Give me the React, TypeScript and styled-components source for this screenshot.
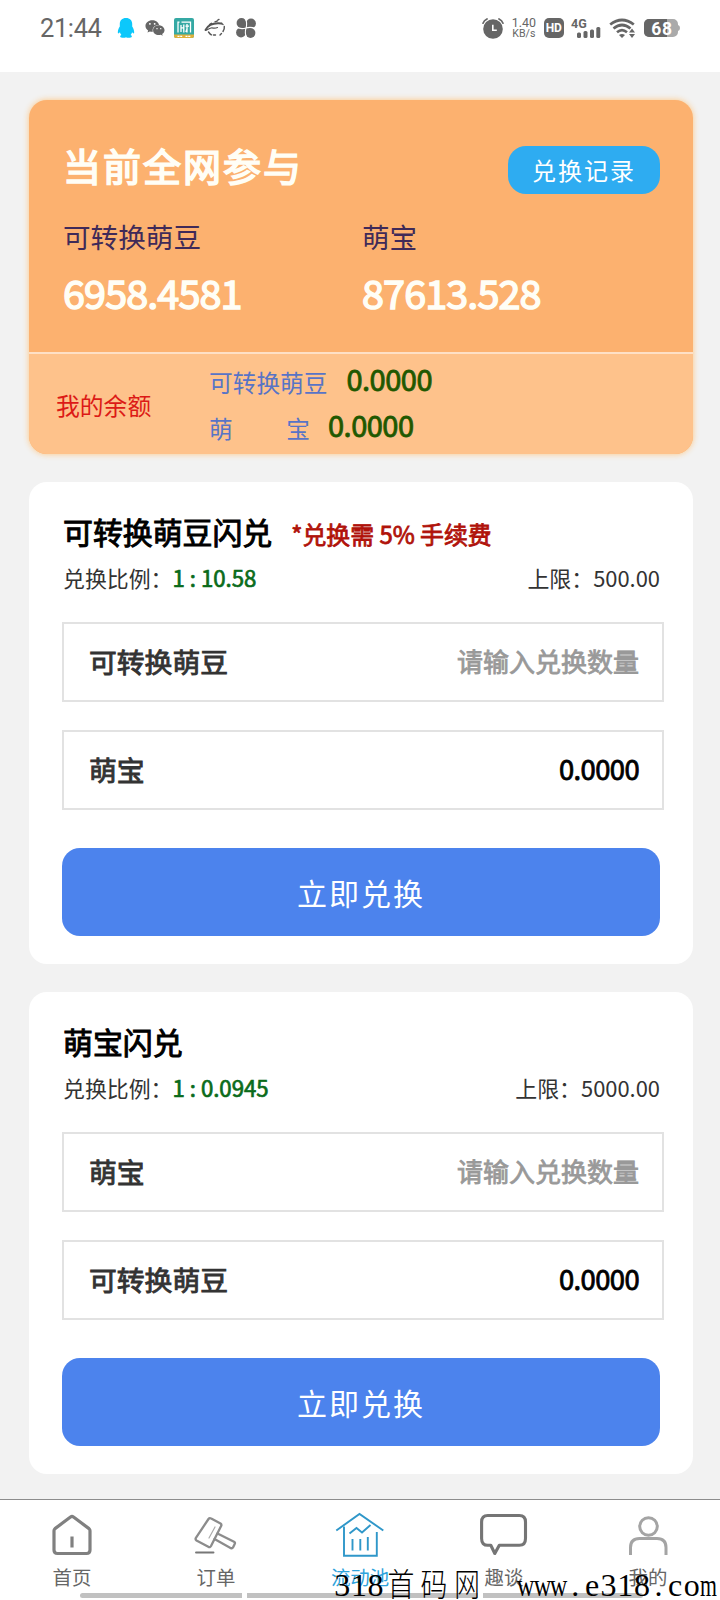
import React from "react";
import styled, { createGlobalStyle } from "styled-components";
import { FaWeixin } from "react-icons/fa";

const GlobalStyle = createGlobalStyle`
  * { box-sizing: border-box; }
  body {
    margin: 0;
    background: #f2f2f2;
    font-family: "Noto Sans CJK SC", sans-serif;
  }
  svg { display: block; flex: none; }
`;

const Screen = styled.div`
  position: relative;
  display: flex;
  flex-direction: column;
  width: 720px;
  height: 1600px;
  overflow: hidden;
  background: #f2f2f2;
`;

/* ---------- status bar ---------- */

const StatusBar = styled.header`
  display: flex;
  justify-content: space-between;
  height: 72px;
  padding: 16px 40px 0 40px;
  background: #fff;
  color: #666;
`;

const StatusGroup = styled.div<{ $gap: number }>`
  display: flex;
  align-items: center;
  gap: ${(p) => p.$gap}px;
  height: 24px;
`;

const Clock = styled.span`
  width: 67px;
  font: 400 25.5px/24px Roboto, sans-serif;
  letter-spacing: -0.4px;
`;

const NetSpeed = styled.span`
  display: flex;
  flex-direction: column;
  align-items: center;
  width: 24px;
  font: 400 12.4px/12px Roboto, sans-serif;

  span:last-child { font-size: 10.6px; line-height: 10px; }
`;

/* ---------- summary card ---------- */

const Content = styled.main`
  display: flex;
  flex-direction: column;
  gap: 28px;
  flex: 1;
  padding: 28px 27px 0 29px;
`;

const SummaryCard = styled.section`
  height: 354px;
  border-radius: 18px;
  background: #fcb16f;
  box-shadow: 0 0 6px #fdc680;
  overflow: hidden;
`;

const SummaryTop = styled.div`
  height: 254px;
  padding: 46px 33px 0 34px;
  border-bottom: 2px solid #fee0c6;
`;

const SummaryHeader = styled.div`
  display: flex;
  justify-content: space-between;
  align-items: flex-start;
`;

const SummaryTitle = styled.h1`
  margin: 0;
  color: #fffef6;
  font-size: 38px;
  font-weight: 400;
  line-height: 37px;
  letter-spacing: 2px;
  -webkit-text-stroke: 1.7px #fffef6;
`;

const HistoryButton = styled.button`
  width: 152px;
  height: 48px;
  padding: 0;
  border: 0;
  border-radius: 18px;
  background: #2eacf1;
  color: #fff;
  font: 400 24px/48px "Noto Sans CJK SC", sans-serif;
  letter-spacing: 2px;
`;

const Stats = styled.div`
  display: grid;
  grid-template-columns: 299px 1fr;
  margin-top: 28px;
`;

const StatLabel = styled.div`
  color: #402a58;
  font-size: 27.6px;
  line-height: 28px;
`;

const StatValue = styled.div`
  margin-top: 16px;
  color: #fffef6;
  font-size: 39.6px;
  line-height: 51px;
  letter-spacing: -0.9px;
  -webkit-text-stroke: 1.5px #fffef6;
`;

const BalanceBar = styled.div`
  display: flex;
  height: 100px;
  background: #fec28b;
`;

const BalanceTitle = styled.div`
  width: 180px;
  padding-left: 27px;
  color: #dc1a16;
  font-size: 23.8px;
  line-height: 102px;
`;

const BalanceRows = styled.div`
  padding-top: 5px;
`;

const BalanceRow = styled.div<{ $gap: number }>`
  display: flex;
  align-items: center;
  gap: ${(p) => p.$gap}px;
  height: 46px;
`;

const BalanceName = styled.span<{ $spread?: boolean }>`
  display: flex;
  justify-content: space-between;
  width: ${(p) => (p.$spread ? "101px" : "auto")};
  color: #5874c6;
  font-size: 23.7px;
  line-height: 46px;
`;

const BalanceValue = styled.span`
  padding-bottom: 7px;
  color: #1f5800;
  font-size: 29px;
  line-height: 39px;
  letter-spacing: -0.5px;
  -webkit-text-stroke: 0.8px #1f5800;
`;

/* ---------- exchange cards ---------- */

const ExchangeCard = styled.section`
  height: 482px;
  padding: 30px 33px 28px;
  border-radius: 18px;
  background: #fff;
`;

const CardHeading = styled.div`
  display: flex;
  gap: 19px;
  height: 40px;
  padding-left: 1px;
`;

const CardTitle = styled.h2`
  margin: 0;
  color: #000;
  font-size: 29.9px;
  font-weight: 400;
  line-height: 39px;
  -webkit-text-stroke: 1px #000;
`;

const FeeNote = styled.span`
  padding-top: 2px;
  color: #b0120a;
  font-size: 23.9px;
  line-height: 40px;
  -webkit-text-stroke: 0.8px #b0120a;
`;

const RateRow = styled.div`
  display: flex;
  justify-content: space-between;
  margin-top: 10px;
  padding-left: 1px;
  color: #333;
  font-size: 21.9px;
  line-height: 31px;
`;

const Rate = styled.span`
  color: #0a6b1a;
  font-size: 22.2px;
  -webkit-text-stroke: 0.7px #0a6b1a;
`;

const Field = styled.label<{ $top: number }>`
  display: flex;
  justify-content: space-between;
  align-items: center;
  width: 602px;
  height: 80px;
  margin-top: ${(p) => p.$top}px;
  padding: 0 23px 3px 25px;
  border: 2px solid #e2e2e2;
  color: #333;
  font-size: 27.8px;
  -webkit-text-stroke: 0.9px #333;
`;

const FieldInput = styled.input`
  width: 200px;
  height: 60px;
  padding: 0;
  border: 0;
  outline: 0;
  background: transparent;
  text-align: right;
  font: 400 26px/60px "Noto Sans CJK SC", sans-serif;
  -webkit-text-stroke: 0.8px #999;

  &::placeholder { color: #999; opacity: 1; }
`;

const FieldValue = styled.output`
  padding-bottom: 2px;
  color: #000;
  font-size: 27.4px;
  letter-spacing: -0.6px;
  -webkit-text-stroke: 0.8px #000;
`;

const SubmitButton = styled.button`
  display: block;
  width: 598px;
  height: 88px;
  margin-top: 38px;
  padding: 0;
  border: 0;
  border-radius: 18px;
  background: #4c83ed;
  color: #fff;
  font: 400 30px/88px "Noto Sans CJK SC", sans-serif;
  letter-spacing: 2px;
`;

/* ---------- tab bar ---------- */

const TabBar = styled.nav`
  display: grid;
  grid-template-columns: repeat(5, 144px);
  height: 101px;
  border-top: 1px solid #8c8c8c;
  background: #fff;
`;

const Tab = styled.a<{ $active?: boolean }>`
  display: flex;
  flex-direction: column;
  align-items: center;
  padding-top: 12px;
  color: ${(p) => (p.$active ? "#2fa3dc" : "#666")};
  font-size: 19.4px;
  line-height: 28px;

  svg { margin-bottom: 3px; }
`;

const GestureBar = styled.div`
  position: absolute;
  left: 80px;
  bottom: 2px;
  display: grid;
  grid-template-columns: 162px 231px 160px;
  gap: 5px;
  height: 5px;

  i { background: #c1c1c1; }
  i:first-child { border-radius: 3px 0 0 3px; }
  i:last-child { border-radius: 0 3px 3px 0; }
`;

const Watermark = styled.div`
  position: absolute;
  left: 334px;
  bottom: 0;
  display: flex;
  height: 30px;
  color: #000;
  font: 400 32px/30px "Liberation Serif", "Noto Sans CJK SC", serif;
`;

const Glyph = styled.span<{ $cell: number; $squeeze: number }>`
  display: flex;
  justify-content: center;
  width: ${(p) => p.$cell}px;
  height: 30px;
  white-space: pre;

  span {
    font-weight: 300;
    transform: scaleX(${(p) => p.$squeeze});
  }
`;

/* ---------- status icons ---------- */

const Penguin = () => (
  <svg width="18" height="20" viewBox="0 0 18 20" fill="#0cc8fb">
    <path d="M9 0C5 0 2.800 2.600 2.800 6v2.500C1.500 10.500.6 13 .9 15c.2.8 1.200.3 2-.7.3 1 .8 1.900 1.500 2.600-1 .4-1.400 1-1.200 1.800.3 1.300 4.500 1.500 5.800.5 1.300 1 5.500.8 5.800-.5.2-.8-.2-1.400-1.200-1.800.7-.7 1.200-1.600 1.500-2.600.8 1 1.800 1.500 2 .7.3-2-.6-4.500-1.900-6.500V6C15.200 2.600 13 0 9 0z" />
  </svg>
);

const TealApp = () => (
  <svg width="20" height="20" viewBox="0 0 20 20">
    <rect width="20" height="20" rx="2" fill="#35a9a4" />
    <path d="M0 16.500h20V18a2 2 0 0 1-2 2H2a2 2 0 0 1-2-2z" fill="#dfb13a" />
    <path d="M4 14.500V4.200h1.500M7.500 4.200H16.500V14.500M7 7v7M9.800 6.500v8M7 9.800h2.500M11.500 8.200h3.500M13 6v8.500M11.800 14l1.200-3" fill="none" stroke="#fff" strokeWidth="1.300" />
    <path d="M3.500 18.300h5M11.500 18.300h5.500" stroke="#fff" strokeWidth="1.300" strokeDasharray="2 .7" />
  </svg>
);

const RunnerApp = () => (
  <svg width="22" height="20" viewBox="0 0 22 20" fill="none" stroke="#555" strokeLinecap="round">
    <path d="M1.500 12C4 7 9 4.500 17.500 5.500" strokeWidth="1.900" />
    <path d="M5.500 6.500l2-1.200M11 3.800l2.500-1M14 1.800l1-.4M17.500 5.500l1.500 1" strokeWidth="1.400" />
    <path d="M1.500 12.500c2.500-1 3.500-2 5.500-2.500 2.500-.3 3.500.8 6.500-.5" strokeWidth="1.200" />
    <path d="M4.500 14c1 1.500 2 2.500 3 2.800M9.500 17h2M20.300 8.500c.3 2-.3 3.500-1.300 5M17.500 15.500L16 17" strokeWidth="1.400" />
  </svg>
);

const FanApp = () => (
  <svg width="20" height="20" viewBox="0 0 20 20">
    <g fill="#666">
      <circle cx="5.500" cy="5" r="4.900" />
      <circle cx="15" cy="5.500" r="4.900" />
      <circle cx="14.500" cy="15" r="4.900" />
      <circle cx="5" cy="14.500" r="4.900" />
      <rect x="6" y="6" width="8" height="8" />
    </g>
    <path d="M10 10Q11.500 5 9.500 1M10 10Q15 8.500 19.500 10.800M10 10Q8.500 15 10.500 19M10 10Q5 11.500.5 9.200" fill="none" stroke="#fff" strokeWidth="1.100" />
  </svg>
);

const Alarm = () => (
  <svg width="22" height="21" viewBox="0 0 22 21">
    <circle cx="11" cy="11" r="9.800" fill="#666" />
    <path d="M1 5.200Q2 2.500 5 1M21 5.200Q20 2.500 17 1" fill="none" stroke="#666" strokeWidth="1.700" strokeLinecap="round" />
    <path d="M10.800 6.800v5.400h4" fill="none" stroke="#fff" strokeWidth="1.600" />
  </svg>
);

const HdBadge = styled.span`
  width: 20px;
  height: 20px;
  border-radius: 5px;
  background: #666;
  color: #fff;
  font: 700 12px/20px Roboto, sans-serif;
  letter-spacing: -0.3px;
  text-align: center;
`;

const Signal = () => (
  <svg width="30" height="20" viewBox="0 0 30 20" fill="#666" overflow="visible">
    <text x="0" y="9.500" fontFamily="Roboto" fontWeight="700" fontSize="12.500">4G</text>
    <rect x="6" y="14.500" width="4" height="5.500" rx="1.500" />
    <rect x="12.500" y="13" width="4" height="7" rx="1.500" />
    <rect x="19" y="11.500" width="4" height="8.500" rx="1.500" />
    <rect x="25.300" y="9" width="4" height="11" rx="1.500" />
  </svg>
);

const Wifi = () => (
  <svg width="27" height="20" viewBox="0 0 27 20" fill="none" stroke="#666">
    <path d="M1.200 6.500Q13 -2.500 24.800 6.500" strokeWidth="2.800" />
    <path d="M4.500 10.500Q13 3.500 21.500 10.500" strokeWidth="2.700" />
    <path d="M8 14.300Q13 10 18 14.300" strokeWidth="2.600" />
    <path d="M10 17q3-1.800 6 0l-3 3z" fill="#666" stroke="none" />
    <path d="M20 14.500h6l-3-4zM20 16h6l-3 4z" fill="#666" stroke="none" />
  </svg>
);

const Battery = () => (
  <svg width="36" height="18" viewBox="0 0 36 18">
    <path d="M5 0h24a5 5 0 0 1 5 5v1q2 .5 2 3t-2 3v1a5 5 0 0 1-5 5H5a5 5 0 0 1-5-5V5a5 5 0 0 1 5-5z" fill="#aaa" />
    <path d="M5 0h18v18H5a5 5 0 0 1-5-5V5a5 5 0 0 1 5-5z" fill="#666" />
    <text x="18" y="15.500" textAnchor="middle" fontFamily="Roboto" fontWeight="700" fontSize="17.500" letterSpacing=".8" fill="#fff">68</text>
  </svg>
);

/* ---------- tab icons ---------- */

const HomeIcon = () => (
  <svg width="50" height="48" viewBox="0 0 50 48" fill="none" stroke="#808080" strokeWidth="3.200" strokeLinejoin="round" strokeLinecap="round">
    <path d="M7 18.800Q7 17.500 8 16.600L23.500 5q1.500-1 3 0L42 16.600q1 .9 1 2.200V38q0 3.500-3.500 3.500h-29q-3.500 0-3.500-3.500z" />
    <path d="M25 24.500v11" strokeLinecap="butt" />
  </svg>
);

const GavelIcon = () => (
  <svg width="50" height="48" viewBox="0 0 50 48" fill="none" stroke="#8c8c8c" strokeWidth="2.300" strokeLinejoin="round" strokeLinecap="round">
    <path d="M17.500 7Q18.500 5.500 20.200 6.500L29.500 11.500q1.500 1 .5 2.800L20 34q-1 1.800-2.700.8L5.500 28.500q-1.500-1-.6-2.600z" />
    <path d="M26.500 21.500l16.500 8.200q1.500.9.7 2.300l-1.700 3.500q-.8 1.300-2.500.4L23.500 27" />
    <path d="M24 15l-6 11" strokeWidth="1.200" stroke="#aaa" />
    <path d="M5 40.500h17.500" stroke="#777" strokeWidth="1.900" />
  </svg>
);

const PoolIcon = () => (
  <svg width="50" height="48" viewBox="0 0 50 48" fill="none" stroke="#2f97c9" strokeWidth="1.900">
    <path d="M1.300 18.500L24.500 2 48.300 18.500" />
    <path d="M9 14.500v29.200h32.800V20" />
    <path d="M14.500 21.500l7-5.500 5.500 4.500 8.500-7.500" />
    <path d="M17.500 27v11.500M25.300 27v11.500M32.800 25v13.500" />
  </svg>
);

const ChatIcon = () => (
  <svg width="50" height="48" viewBox="0 0 50 48" fill="none" stroke="#757575" strokeWidth="3.100" strokeLinejoin="round">
    <path d="M8.800 3.500h31.500q6.200 0 6.200 6.500v16.500q0 6.800-6.200 6.800H20.300L15.800 41.500l-4-8.200h-3q-6.200 0-6.200-6.800V10q0-6.500 6.200-6.500z" />
  </svg>
);

const PersonIcon = () => (
  <svg width="50" height="48" viewBox="0 0 50 48" fill="none" stroke="#a4a4a4" strokeWidth="3">
    <circle cx="25.500" cy="14.500" r="8.800" />
    <path d="M7.500 43V35.500q0-9 9-9h17.500q9 0 9 9v7.500" />
  </svg>
);

const tabs = [
  { label: "首页", Icon: HomeIcon },
  { label: "订单", Icon: GavelIcon },
  { label: "流动池", Icon: PoolIcon, active: true },
  { label: "趣谈", Icon: ChatIcon },
  { label: "我的", Icon: PersonIcon },
];

const exchanges = [
  { title: "可转换萌豆闪兑", note: "*兑换需 5% 手续费", rate: "1 : 10.58", limit: "500.00", from: "可转换萌豆", to: "萌宝" },
  { title: "萌宝闪兑", note: "", rate: "1 : 0.0945", limit: "5000.00", from: "萌宝", to: "可转换萌豆" },
];

const squeeze: Record<string, number> = { w: 0.76, m: 0.68, 首: 0.84, 码: 0.84, 网: 0.8 };
const cellWidth = (ch: string) => ("首码网".includes(ch) ? 33.3 : 16.65);

export default function App() {
  return (
    <>
      <GlobalStyle />
      <Screen>
        <StatusBar>
          <StatusGroup $gap={9.8}>
            <Clock>21:44</Clock>
            <Penguin />
            <FaWeixin size={20} />
            <TealApp />
            <RunnerApp />
            <FanApp />
          </StatusGroup>
          <StatusGroup $gap={7.8}>
            <Alarm />
            <NetSpeed>
              <span>1.40</span>
              <span>KB/s</span>
            </NetSpeed>
            <HdBadge>HD</HdBadge>
            <Signal />
            <Wifi />
            <Battery />
          </StatusGroup>
        </StatusBar>

        <Content>
          <SummaryCard>
            <SummaryTop>
              <SummaryHeader>
                <SummaryTitle>当前全网参与</SummaryTitle>
                <HistoryButton>兑换记录</HistoryButton>
              </SummaryHeader>
              <Stats>
                <div>
                  <StatLabel>可转换萌豆</StatLabel>
                  <StatValue>6958.4581</StatValue>
                </div>
                <div>
                  <StatLabel>萌宝</StatLabel>
                  <StatValue>87613.528</StatValue>
                </div>
              </Stats>
            </SummaryTop>
            <BalanceBar>
              <BalanceTitle>我的余额</BalanceTitle>
              <BalanceRows>
                <BalanceRow $gap={19}>
                  <BalanceName>可转换萌豆</BalanceName>
                  <BalanceValue>0.0000</BalanceValue>
                </BalanceRow>
                <BalanceRow $gap={18}>
                  <BalanceName $spread>
                    <span>萌</span>
                    <span>宝</span>
                  </BalanceName>
                  <BalanceValue>0.0000</BalanceValue>
                </BalanceRow>
              </BalanceRows>
            </BalanceBar>
          </SummaryCard>

          {exchanges.map((x) => (
            <ExchangeCard key={x.title}>
              <CardHeading>
                <CardTitle>{x.title}</CardTitle>
                {x.note && <FeeNote>{x.note}</FeeNote>}
              </CardHeading>
              <RateRow>
                <span>
                  兑换比例：<Rate>{x.rate}</Rate>
                </span>
                <span>上限：{x.limit}</span>
              </RateRow>
              <Field $top={29}>
                {x.from}
                <FieldInput placeholder="请输入兑换数量" />
              </Field>
              <Field $top={28}>
                {x.to}
                <FieldValue>0.0000</FieldValue>
              </Field>
              <SubmitButton>立即兑换</SubmitButton>
            </ExchangeCard>
          ))}
        </Content>

        <TabBar>
          {tabs.map(({ label, Icon, active }) => (
            <Tab key={label} $active={active}>
              <Icon />
              {label}
            </Tab>
          ))}
        </TabBar>
        <GestureBar>
          <i />
          <i />
          <i />
        </GestureBar>
        <Watermark>
          {[..."318首码网  www.e318.com"].map((ch, i) => (
            <Glyph key={i} $cell={cellWidth(ch)} $squeeze={squeeze[ch] ?? 1}>
              <span>{ch}</span>
            </Glyph>
          ))}
        </Watermark>
      </Screen>
    </>
  );
}
